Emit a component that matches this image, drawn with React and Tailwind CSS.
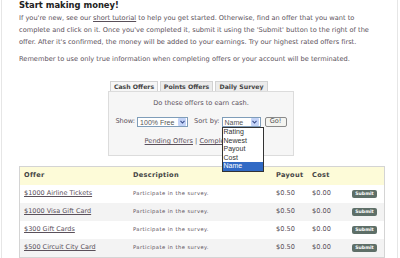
import React from 'react';

const offers = [
  { name: '$1000 Airline Tickets', alt: false },
  { name: '$1000 Visa Gift Card', alt: true },
  { name: '$300 Gift Cards', alt: false },
  { name: '$500 Circuit City Card', alt: true },
];

function Chevron() {
  return (
    <span className="flex h-full w-[8px] items-center justify-center rounded-[1px] bg-[#c3d3f7]">
      <svg width="5" height="4" viewBox="0 0 5 4">
        <path d="M0.5 0.8 L2.5 3 L4.5 0.8" fill="none" stroke="#3b4f8c" strokeWidth="1.1" />
      </svg>
    </span>
  );
}

function Select({ value, width }) {
  return (
    <div className={`flex h-[10px] items-center border border-[#7f9db9] bg-white pl-[2px] pr-[1px] ${width}`}>
      <span className="flex-1 text-[7px] leading-none text-[#555] [font-family:'Liberation_Sans',Arial,sans-serif]">{value}</span>
      <Chevron />
    </div>
  );
}

export default function App() {
  return (
    <div className="h-[258px] w-[400px] overflow-hidden bg-white [font-family:'DejaVu_Sans',Verdana,sans-serif]">
      <div className="ml-[1px] h-full w-[397px] border-x border-[#e6e6e6] pl-[17px] pr-[14px]">
        <h1 className="text-[8.4px] font-bold leading-[10px] text-[#222]">Start making money!</h1>
        <p className="mt-[2px] whitespace-nowrap text-[6.65px] leading-[12px] text-[#5a505a]">
          If you're new, see our <span className="underline">short tutorial</span> to help you get started. Otherwise, find an offer that you want to<br />
          complete and click on it. Once you've completed it, submit it using the 'Submit' button to the right of the<br />
          offer. After it's confirmed, the money will be added to your earnings. Try our highest rated offers first.
        </p>
        <p className="mt-[5px] whitespace-nowrap text-[6.65px] leading-[12px] text-[#5a505a]">
          Remember to use only true information when completing offers or your account will be terminated.
        </p>

        <div className="mt-[16px] flex justify-center">
          <div className="w-[186px]">
            <div className="flex gap-[2px] pl-[2px]">
              <div className="relative -mb-px flex h-[11px] w-[48px] items-center justify-center border border-b-0 border-[#d2d2d2] bg-[#f6f6f6] text-[6.2px] font-semibold text-[#444]">Cash Offers</div>
              <div className="flex h-[10px] w-[53px] items-center justify-center border border-b-0 border-[#d2d2d2] bg-[#ececec] text-[6.2px] font-semibold text-[#444]">Points Offers</div>
              <div className="flex h-[10px] w-[53px] items-center justify-center border border-b-0 border-[#d2d2d2] bg-[#ececec] text-[6.2px] font-semibold text-[#444]">Daily Survey</div>
            </div>
            <div className="relative flex h-[65px] flex-col items-center border border-[#dcdcdc] bg-[#f6f6f6] text-[6.6px] text-[#5a505a]">
              <div className="mt-[7px] leading-[8px]">Do these offers to earn cash.</div>
              <div className="mt-[10px] flex items-center whitespace-nowrap">
                <span>Show:</span>
                <div className="ml-[2px]"><Select value="100% Free" width="w-[51px]" /></div>
                <span className="ml-[6px]">Sort by:</span>
                <div className="relative ml-[2px]">
                  <Select value="Name" width="w-[39px]" />
                  <div className="absolute left-0 top-[10px] z-10 w-[42px] border border-[#333] bg-white text-[7px] leading-[8.6px] text-[#333] [font-family:'Liberation_Sans',Arial,sans-serif]">
                    <div className="pl-[1px]">Rating</div>
                    <div className="pl-[1px]">Newest</div>
                    <div className="pl-[1px]">Payout</div>
                    <div className="pl-[1px]">Cost</div>
                    <div className="bg-[#316ac5] pl-[1px] text-white">Name</div>
                  </div>
                </div>
                <button className="ml-[4px] flex h-[10px] w-[22px] items-center justify-center rounded-[2px] border border-[#8a8a8a] bg-[#f4f4f0] text-[6.6px] text-[#555]">Go!</button>
              </div>
              <div className="mt-[10px] whitespace-nowrap leading-[8px]">
                <span className="underline">Pending Offers</span> | <span className="underline">Completed Offers</span>
              </div>
            </div>
          </div>
        </div>

        <div className="mt-[10px] w-[366px] border border-[#d4d4d4]">
          <div className="grid h-[18px] grid-cols-[109px_143px_36px_40px_1fr] items-center bg-[#fdfbd8] text-[6.6px] font-semibold tracking-[0.3px] text-[#444]">
            <span className="pl-[4px]">Offer</span>
            <span className="pl-[4px]">Description</span>
            <span className="pl-[4px]">Payout</span>
            <span className="pl-[4px]">Cost</span>
            <span />
          </div>
          {offers.map((o) => (
            <div key={o.name} className={`grid h-[18px] grid-cols-[109px_143px_36px_40px_1fr] items-center whitespace-nowrap text-[#5a505a] ${o.alt ? 'bg-[#f3f3f3]' : 'bg-white'}`}>
              <span className="pl-[4px] text-[6.5px] underline">{o.name}</span>
              <span className="pl-[4px] text-[5.2px] tracking-[0.45px]">Participate in the survey.</span>
              <span className="pl-[4px] text-[6.6px]">$0.50</span>
              <span className="pl-[4px] text-[6.6px]">$0.00</span>
              <span className="pl-[4px]">
                <span className="flex h-[8px] w-[25px] items-center justify-center rounded-[2px] bg-[#5e6f68] text-[4.6px] font-bold text-white">Submit</span>
              </span>
            </div>
          ))}
        </div>
      </div>
    </div>
  );
}
